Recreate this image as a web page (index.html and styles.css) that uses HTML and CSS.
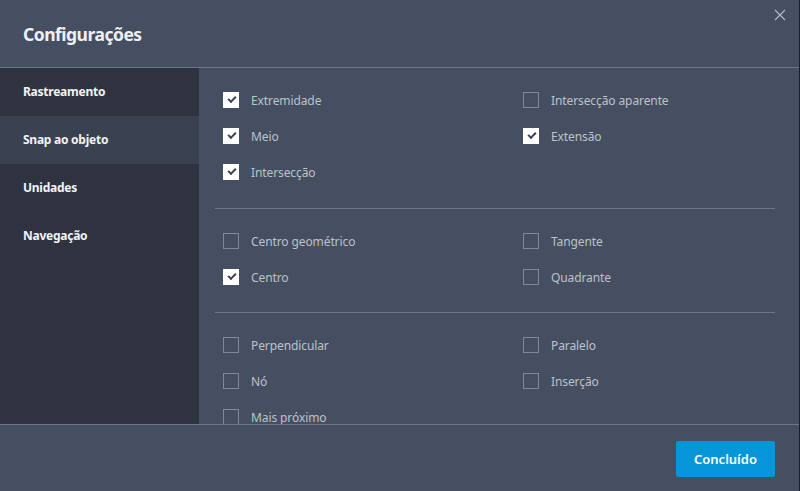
FILE: index.html
```html
<!DOCTYPE html>
<html lang="pt">
<head>
<meta charset="utf-8">
<link rel="stylesheet" href="styles.css">
</head>
<body>
<div class="dialog">
  <header class="header">
    <h1 class="title">Configurações</h1>
    <button class="close" aria-label="Fechar">
      <svg width="12" height="12" viewBox="0 0 12 12"><path d="M1 1L11 11M11 1L1 11" stroke="#b3b9c4" stroke-width="1.2" fill="none"/></svg>
    </button>
  </header>
  <div class="main">
    <nav class="sidebar">
      <div class="nav-item">Rastreamento</div>
      <div class="nav-item active">Snap ao objeto</div>
      <div class="nav-item">Unidades</div>
      <div class="nav-item">Navegação</div>
    </nav>
    <section class="content">
      <div class="group">
        <label class="opt"><span class="box checked"></span>Extremidade</label>
        <label class="opt"><span class="box"></span>Intersecção aparente</label>
        <label class="opt"><span class="box checked"></span>Meio</label>
        <label class="opt"><span class="box checked"></span>Extensão</label>
        <label class="opt"><span class="box checked"></span>Intersecção</label>
      </div>
      <div class="group">
        <label class="opt"><span class="box"></span>Centro geométrico</label>
        <label class="opt"><span class="box"></span>Tangente</label>
        <label class="opt"><span class="box checked"></span>Centro</label>
        <label class="opt"><span class="box"></span>Quadrante</label>
      </div>
      <div class="group">
        <label class="opt"><span class="box"></span>Perpendicular</label>
        <label class="opt"><span class="box"></span>Paralelo</label>
        <label class="opt"><span class="box"></span>Nó</label>
        <label class="opt"><span class="box"></span>Inserção</label>
        <label class="opt"><span class="box"></span>Mais próximo</label>
      </div>
    </section>
  </div>
  <footer class="footer">
    <button class="done">Concluído</button>
  </footer>
</div>
</body>
</html>
```
FILE: styles.css
```css
html, body {
  margin: 0;
  padding: 0;
  background: #1b1e25;
}
body {
  font-family: "Noto Sans", "Open Sans", sans-serif;
}
.dialog {
  width: 799px;
  height: 491px;
  background: #464f61;
  border-right: 1px solid #1b1e25;
  display: flex;
  flex-direction: column;
  overflow: hidden;
}
.header {
  height: 67px;
  border-bottom: 1px solid #6c768a;
  display: flex;
  align-items: flex-start;
  justify-content: space-between;
  flex: none;
}
.title {
  margin: 0;
  padding: 22px 0 0 23px;
  font-size: 17.5px;
  font-weight: 700;
  color: #eef0f3;
  line-height: 24px;
  letter-spacing: -0.5px;
}
.close {
  background: none;
  border: 0;
  padding: 0;
  margin: 9px 13px 0 0;
  width: 12px;
  height: 12px;
  display: flex;
}
.main {
  height: 356px;
  display: flex;
  flex: none;
  overflow: hidden;
}
.sidebar {
  width: 199px;
  background: #2e333f;
  flex: none;
}
.nav-item {
  height: 48px;
  padding: 15px 0 0 23px;
  box-sizing: border-box;
  font-size: 12px;
  font-weight: 700;
  color: #f2f3f5;
  line-height: 18px;
  letter-spacing: -0.25px;
}
.nav-item.active {
  background: #3a4151;
}
.content {
  flex: 1;
  padding: 0 24px 0 16px;
  overflow: hidden;
}
.group {
  display: grid;
  grid-template-columns: 300px 1fr;
  grid-auto-rows: 36px;
  padding: 14px 0 18px 8px;
  border-bottom: 1px solid #6c768a;
}
.group + .group {
  padding-bottom: 17px;
}
.opt {
  display: flex;
  align-items: center;
  gap: 12px;
  font-size: 12px;
  color: #bcc1ca;
  letter-spacing: -0.1px;
}
.box {
  width: 16px;
  height: 16px;
  box-sizing: border-box;
  border: 1px solid #7f889a;
  flex: none;
  position: relative;
}
.box.checked {
  background: #ffffff;
  border-color: #ffffff;
}
.box.checked::after {
  content: "";
  position: absolute;
  left: 4px;
  top: 3px;
  width: 6px;
  height: 3px;
  border-left: 2px solid #3a4151;
  border-bottom: 2px solid #3a4151;
  transform: rotate(-45deg);
  transform-origin: center;
}
.footer {
  flex: 1;
  border-top: 1px solid #6c768a;
  display: flex;
  justify-content: flex-end;
  align-items: flex-start;
  padding: 16px 24px 0 0;
}
.done {
  width: 99px;
  height: 36px;
  background: #0696d7;
  border: 0;
  border-radius: 2px;
  color: #ffffff;
  font-family: "Noto Sans", "Open Sans", sans-serif;
  font-size: 13px;
  font-weight: 600;
  padding: 0;
}
```
